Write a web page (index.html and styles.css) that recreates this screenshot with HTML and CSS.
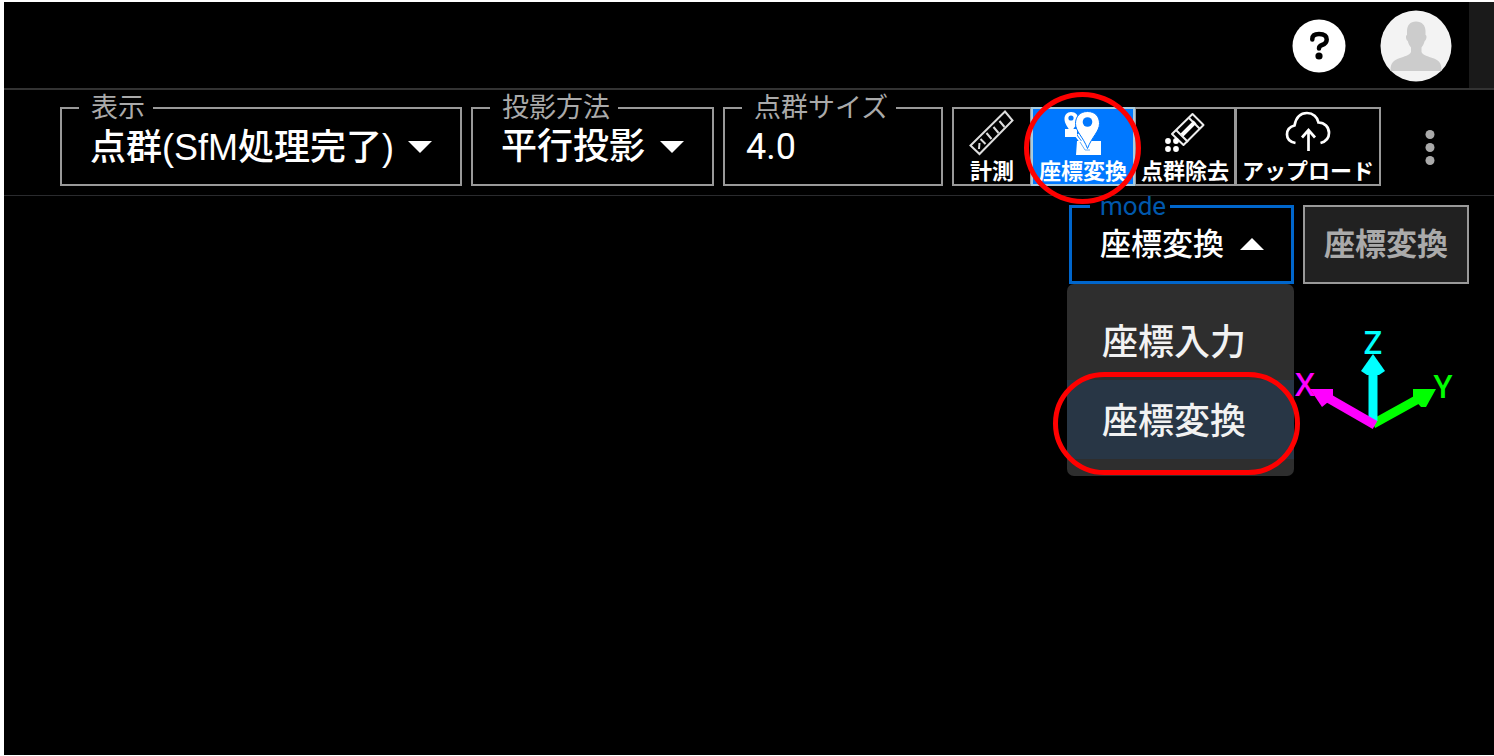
FILE: index.html
```html
<!DOCTYPE html>
<html lang="ja">
<head>
<meta charset="utf-8">
<title>点群ビューア</title>
<link rel="stylesheet" href="styles.css">
</head>
<body>
<div class="app">
  <header class="header">
    <button class="icon-button" type="button" aria-label="ヘルプ">
      <svg width="54" height="54" viewBox="0 0 54 54"><circle cx="27" cy="27" r="26.500" fill="#fff"/><path d="M20.300 20.500v-.5q0-5 6.700-5 7.700 0 7.700 5.500 0 4-4.700 5.500-3 1-3 3.500" fill="none" stroke="#000" stroke-width="4.500" stroke-linecap="round"/><circle cx="27" cy="37" r="3.600"/></svg>
    </button>
    <button class="icon-button" type="button" aria-label="アカウント">
      <svg width="72" height="72" viewBox="0 0 72 72"><circle cx="36" cy="36" r="35.500" fill="#f3f3f3"/><path d="M36 11.500c6 0 9.500 4 9.500 9.500v4c1.800.5 1 5-.8 6-1 3.500-2 5-3.200 6.500v4.500c1.500 3.500 7 4.500 11 6 6 2 9 4.500 9 12v1H10.500v-1c0-7.500 3.500-10 9.500-12 4-1.500 9.500-2.500 11-6v-4.500c-1.200-1.500-2.400-3-3.200-6.500-1.800-1-2.600-5.500-.8-6v-4c0-5.500 3-9.500 9-9.500z" fill="#ccc"/></svg>
    </button>
    <div class="header-edge"></div>
  </header>

  <div class="toolbar">
    <fieldset class="field field-view">
      <legend><label for="view">表示</label></legend>
      <div class="control">
        <select id="view"><option>点群(SfM処理完了)</option></select>
        <svg class="caret" width="24" height="12" viewBox="0 0 24 12"><path d="M0 0h24L12 12z" fill="#fff"/></svg>
      </div>
    </fieldset>
    <fieldset class="field field-projection">
      <legend><label for="projection">投影方法</label></legend>
      <div class="control">
        <select id="projection"><option>平行投影</option></select>
        <svg class="caret" width="24" height="12" viewBox="0 0 24 12"><path d="M0 0h24L12 12z" fill="#fff"/></svg>
      </div>
    </fieldset>
    <fieldset class="field field-size">
      <legend><label for="size">点群サイズ</label></legend>
      <div class="control"><input id="size" type="text" inputmode="decimal" value="4.0"></div>
    </fieldset>

    <div class="tools">
      <button class="tool tool-measure" type="button">
        <svg width="46" height="46" viewBox="0 0 46 46"><g fill="none" stroke="#ddd" stroke-width="2"><path d="M1.500 35.500 36 1.500l7.500 9L10.500 44z"/><path d="m10 39 .5-6m6 1-5-5m11 0-5-6m12 0-5-6m11 0-5-6"/></g></svg>
        <span>計測</span>
      </button>
      <button class="tool tool-active" type="button">
        <svg width="40" height="46" viewBox="0 0 40 46"><path d="M2 19h12v8H2zM14 31h24v14H13z" fill="#fff"/><path d="M8 2c5 0 7 3 7 7 0 5-4 8-7 14C5 17 1.500 14 1.500 9 1.500 5 4 2 8 2z" fill="#fff"/><circle cx="8" cy="8" r="2.600" fill="#0078ff"/><path d="m10 22 13 17M15 24l10 14" fill="none" stroke="#fff" stroke-width="2"/><path d="M24.500 1.500c8 0 12 5.500 12 12 0 8-7.500 13-12 25-4.500-12-12-17-12-25 0-6.500 4-12 12-12z" fill="#fff" stroke="#0078ff" stroke-width="1"/><circle cx="24.500" cy="12" r="4.800" fill="#0078ff"/><path d="m17 32 5 8h5" fill="none" stroke="#6aaef5"/></svg>
        <span>座標変換</span>
        <i class="mark mark-tool"></i>
      </button>
      <button class="tool" type="button">
        <svg width="40" height="46" viewBox="0 0 40 46"><g fill="none" stroke="#eee" stroke-width="2" stroke-linejoin="round"><path d="M27.500 4 38.500 15 18.500 35 7 24z"/><path d="m11 20 12 12M24 8l11 11"/></g><path d="M30 12 17 25" stroke="#fff" stroke-width="4"/><g fill="#fff"><circle cx="3" cy="31" r="2.900"/><circle cx="11" cy="31" r="2.900"/><circle cx="3" cy="39" r="2.900"/><circle cx="11" cy="39" r="2.900"/></g></svg>
        <span>点群除去</span>
      </button>
      <button class="tool" type="button">
        <svg width="46" height="46" viewBox="0 0 46 46"><g fill="none" stroke="#fff" stroke-width="2.700"><path d="M10.500 33C5 32 2 28.500 2 24.500c0-5 3.500-8 7.500-9C11 7.500 15.500 3 22 3c6 0 10.500 4 11.500 9.500 6 0 10.500 4.500 10.500 10.500 0 5-3 8.500-8.500 10"/><path d="M23.500 41V20.500M17 27.500l6.500-7.500 6.500 7.500"/></g></svg>
        <span>アップロード</span>
      </button>
    </div>

    <button class="icon-button more" type="button" aria-label="その他">
      <svg width="48" height="48" viewBox="0 0 48 48" fill="#aaa"><circle cx="24" cy="10.500" r="4.500"/><circle cx="24" cy="23.500" r="4.500"/><circle cx="24" cy="36.500" r="4.500"/></svg>
    </button>
  </div>

  <main class="scene">
    <div class="mode-row">
      <div class="mode">
        <fieldset class="field field-mode">
          <legend><label for="mode">mode</label></legend>
          <div class="control">
            <select id="mode"><option>座標変換</option><option>座標入力</option></select>
            <svg class="caret" width="24" height="12" viewBox="0 0 24 12"><path d="M0 12h24L12 0z" fill="#fff"/></svg>
          </div>
        </fieldset>
        <div class="menu">
          <button class="menu-item" type="button">座標入力</button>
          <button class="menu-item menu-item-selected" type="button">座標変換<i class="mark mark-item"></i></button>
        </div>
      </div>
      <button class="convert" type="button" disabled>座標変換</button>
    </div>
    <svg class="axes" width="160" height="122" viewBox="0 -16 160 122">
      <g class="axes-label">
        <text x="11" y="67" fill="#f0f">X</text>
        <text x="79" y="25" fill="#0ff">Z</text>
        <text x="149" y="69" fill="#0f0">Y</text>
      </g>
      <path d="M79 95 126 69" stroke="#0f0" stroke-width="9"/><path d="M119 60h23l-10 18h-5l-8-9z" fill="#0f0"/>
      <path d="M79 92V40" stroke="#0ff" stroke-width="9"/><path d="M79 25 91 42 85 46H73l-6-4z" fill="#0ff"/>
      <path d="M81 96 34 69" stroke="#f0f" stroke-width="9"/><path d="M16 60h23v9l-11 9z" fill="#f0f"/>
    </svg>
  </main>
</div>
</body>
</html>
```
FILE: styles.css
```css
* { box-sizing: border-box; }

body {
  margin: 0;
  background: #fff;
  font-family: Roboto, "Noto Sans CJK JP", sans-serif;
}

button, select, input {
  margin: 0;
  padding: 0;
  border: 0;
  border-radius: 0;
  background: transparent;
  color: #fff;
  font-family: inherit;
  opacity: 1;
}

svg { display: block; flex: none; }

.app {
  display: flex;
  flex-direction: column;
  min-height: 100vh;
  border: solid #fff;
  border-width: 2px 0 1px 4px;
  background: #000;
}

.header {
  display: flex;
  justify-content: flex-end;
  align-items: center;
  gap: 34px;
  height: 88px;
  border-bottom: 2px solid #333;
}

.header .icon-button { margin-top: 2px; }

.header-edge {
  align-self: stretch;
  width: 25px;
  margin-left: -17px;
  background: #1a1a1a;
}

.toolbar {
  display: flex;
  justify-content: flex-end;
  align-items: flex-end;
  gap: 9px;
  padding: 4px 40px 9px 8px;
  border-bottom: 1px solid #2a2b2e;
}

.field {
  min-width: 0;
  margin: 0;
  padding: 0 17px 12px;
  border: 2px solid #999;
}

.field legend {
  padding: 0 8px 0 12px;
  color: #aaa;
  font-size: 27px;
  line-height: 28px;
}

.field-view { flex: 0 1 402px; }
.field-projection { flex: 0 1 243px; }
.field-size { flex: 0 1 220px; }

.control { display: grid; align-items: center; }
.control > * { grid-area: 1 / 1; }

.control select, .control input {
  width: 100%;
  height: 50px;
  padding-left: 11px;
  appearance: none;
  font-size: 36px;
  font-weight: 500;
  outline: 0;
}

.control input { padding-left: 4px; font-weight: 400; }
.field-view select { font-family: "Liberation Sans", "Noto Sans CJK JP", sans-serif; }

.caret {
  justify-self: end;
  margin-right: 11px;
  pointer-events: none;
}

.tools { display: flex; }

.tool {
  position: relative;
  display: flex;
  flex-direction: column;
  align-items: center;
  height: 79px;
  padding: 1px 5px 0;
  border: 2px solid #999;
  font-size: 22px;
  font-weight: 700;
  line-height: 31px;
  white-space: nowrap;
}

.tool + .tool { margin-left: -1px; }
.tool-measure { padding: 1px 15px 0; }
.tool-active {
  z-index: 2;
  padding: 1px 6px 0;
  background: #0078ff;
  border-color: #acd;
}

.more { margin: 0 0 14px 16px; }

.mark {
  position: absolute;
  border: 5px solid #f00;
  pointer-events: none;
}

.mark-tool { inset: -17px -8px -20px -9px; border-radius: 50%; }
.mark-item { inset: -8px -6px -16px -14px; border-radius: 52px; }

.scene {
  flex: 1;
  display: flex;
  flex-direction: column;
  align-items: flex-end;
  padding-right: 25px;
}

.mode-row {
  display: flex;
  align-items: flex-end;
  gap: 9px;
  margin-top: -4px;
}

.mode { position: relative; width: 225px; }

.field-mode {
  padding: 0 16px 13px 18px;
  border: 3px solid #06c;
}

.field-mode legend { padding: 0 4px 0 10px; color: #0058ac; font-size: 26px; }
.field-mode select { height: 48px; padding-left: 10px; font-size: 31px; }

.convert {
  height: 79px;
  padding: 0 19px 6px;
  border: 2px solid #999;
  background: #212121;
  color: #aaa;
  font-size: 31px;
  font-weight: 700;
}

.menu {
  position: absolute;
  z-index: 1;
  top: 100%;
  left: -2px;
  right: 0;
  padding: 17px 0;
  border-radius: 7px;
  background: #2e2e2e;
}

.menu-item {
  position: relative;
  display: block;
  width: 100%;
  height: 79px;
  padding: 0 0 4px 35px;
  color: #f2f2f2;
  font-size: 36px;
  font-weight: 500;
  text-align: left;
}

.menu-item-selected { background: #283645; }

.axes { margin: 29px 15px 0 0; }

.axes-label {
  font: 600 32px "Open Sans", sans-serif;
  text-anchor: middle;
}
```
